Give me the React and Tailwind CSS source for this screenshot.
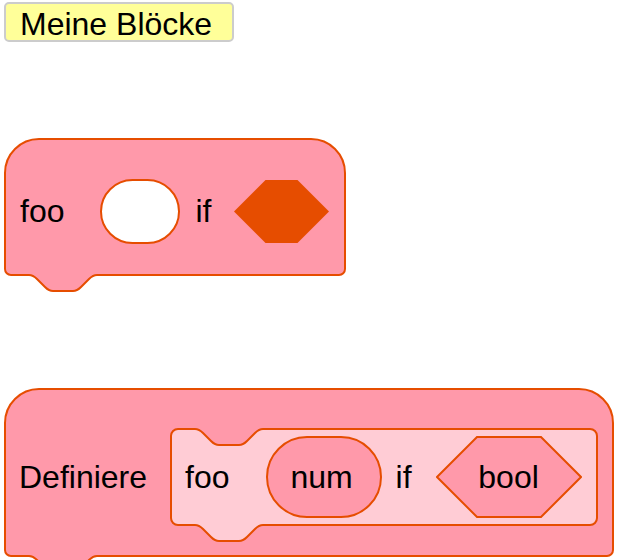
import React from 'react'

const FILL = '#ff99aa'
const INNER = '#ffccd5'
const EDGE = '#e64d00'

// notch going right (down into the block) and going left (back up)
const NOTCH_R = 'c 4,0 6,2 8,4 l 8,8 c 2,2 4,4 8,4 h 20 c 4,0 6,-2 8,-4 l 8,-8 c 2,-2 4,-4 8,-4'
const NOTCH_L = 'c -4,0 -6,2 -8,4 l -8,8 c -2,2 -4,4 -8,4 h -20 c -4,0 -6,-2 -8,-4 l -8,-8 c -2,-2 -4,-4 -8,-4'

function blockPath(w, h, topR, r, topNotch) {
  const n = 25
  const top = topNotch
    ? `M 1,${1 + r} A ${r} ${r} 0 0 1 ${1 + r},1 H ${n} ${NOTCH_R} H ${w - 1 - r} A ${r} ${r} 0 0 1 ${w - 1},${1 + r}`
    : `M 1,${1 + topR} A ${topR} ${topR} 0 0 1 ${1 + topR},1 H ${w - 1 - topR} A ${topR} ${topR} 0 0 1 ${w - 1},${1 + topR}`
  return `${top} V ${h - 1 - r} A ${r} ${r} 0 0 1 ${w - 1 - r},${h - 1} H ${n + 68} ${NOTCH_L} H ${1 + r} A ${r} ${r} 0 0 1 1,${h - 1 - r} Z`
}

function BlockShape({ w, h, topR = 34, r = 6, topNotch = false, fill = FILL }) {
  return (
    <svg className="absolute left-0 top-0 overflow-visible" width={w} height={h + 18}>
      <path d={blockPath(w, h, topR, r, topNotch)} fill={fill} stroke={EDGE} strokeWidth="2" />
    </svg>
  )
}

function Hexagon({ w, h, filled, children }) {
  const m = h / 2
  const pts = filled
    ? `0,${m} ${m},0 ${w - m},0 ${w},${m} ${w - m},${h} ${m},${h}`
    : `1,${m} ${m},1 ${w - m},1 ${w - 1},${m} ${w - m},${h - 1} ${m},${h - 1}`
  return (
    <div className="relative flex items-center justify-center" style={{ width: w, height: h }}>
      <svg className="absolute left-0 top-0" width={w} height={h}>
        <polygon points={pts} fill={filled ? EDGE : FILL} stroke={filled ? 'none' : EDGE} strokeWidth="2" />
      </svg>
      {children && <span className="relative">{children}</span>}
    </div>
  )
}

export default function App() {
  return (
    <div
      className="flex min-h-screen flex-col items-start bg-white pl-[4px] pt-[2px] text-[32px] text-black"
      style={{ fontFamily: "'Liberation Sans', Arial, sans-serif" }}
    >
      <div className="h-[40px] w-[230px] rounded-[5px] border-2 border-[#cccccc] bg-[#ffff99] pl-[14px] pt-[4px] leading-none">
        Meine Blöcke
      </div>

      {/* prototype block */}
      <div className="relative mt-[96px] h-[138px] w-[342px]">
        <BlockShape w={342} h={138} />
        <div className="relative flex h-full items-center pl-[16px] pt-[8px]">
          <span>foo</span>
          <div className="ml-[36px] h-[65px] w-[80px] rounded-full border-2 border-[#e64d00] bg-white" />
          <span className="ml-[15px]">if</span>
          <div className="ml-[23px]">
            <Hexagon w={95} h={63} filled />
          </div>
        </div>
      </div>

      {/* define hat */}
      <div className="relative mt-[112px] h-[169px] w-[610px]">
        <BlockShape w={610} h={169} />
        <div className="relative flex h-full items-center pl-[15px] pt-[8px]">
          <span>Definiere</span>
          <div className="relative ml-[23px] h-[98px] w-[428px]">
            <BlockShape w={428} h={98} r={7} topNotch fill={INNER} />
            <div className="relative flex h-full items-center pl-[15px]">
              <span>foo</span>
              <div className="ml-[36px] flex h-[82px] w-[116px] items-center justify-center rounded-full border-2 border-[#e64d00] bg-[#ff99aa] pr-[4px]">
                num
              </div>
              <span className="ml-[14px]">if</span>
              <div className="ml-[24px]">
                <Hexagon w={146} h={82}>bool</Hexagon>
              </div>
            </div>
          </div>
        </div>
      </div>
    </div>
  )
}
